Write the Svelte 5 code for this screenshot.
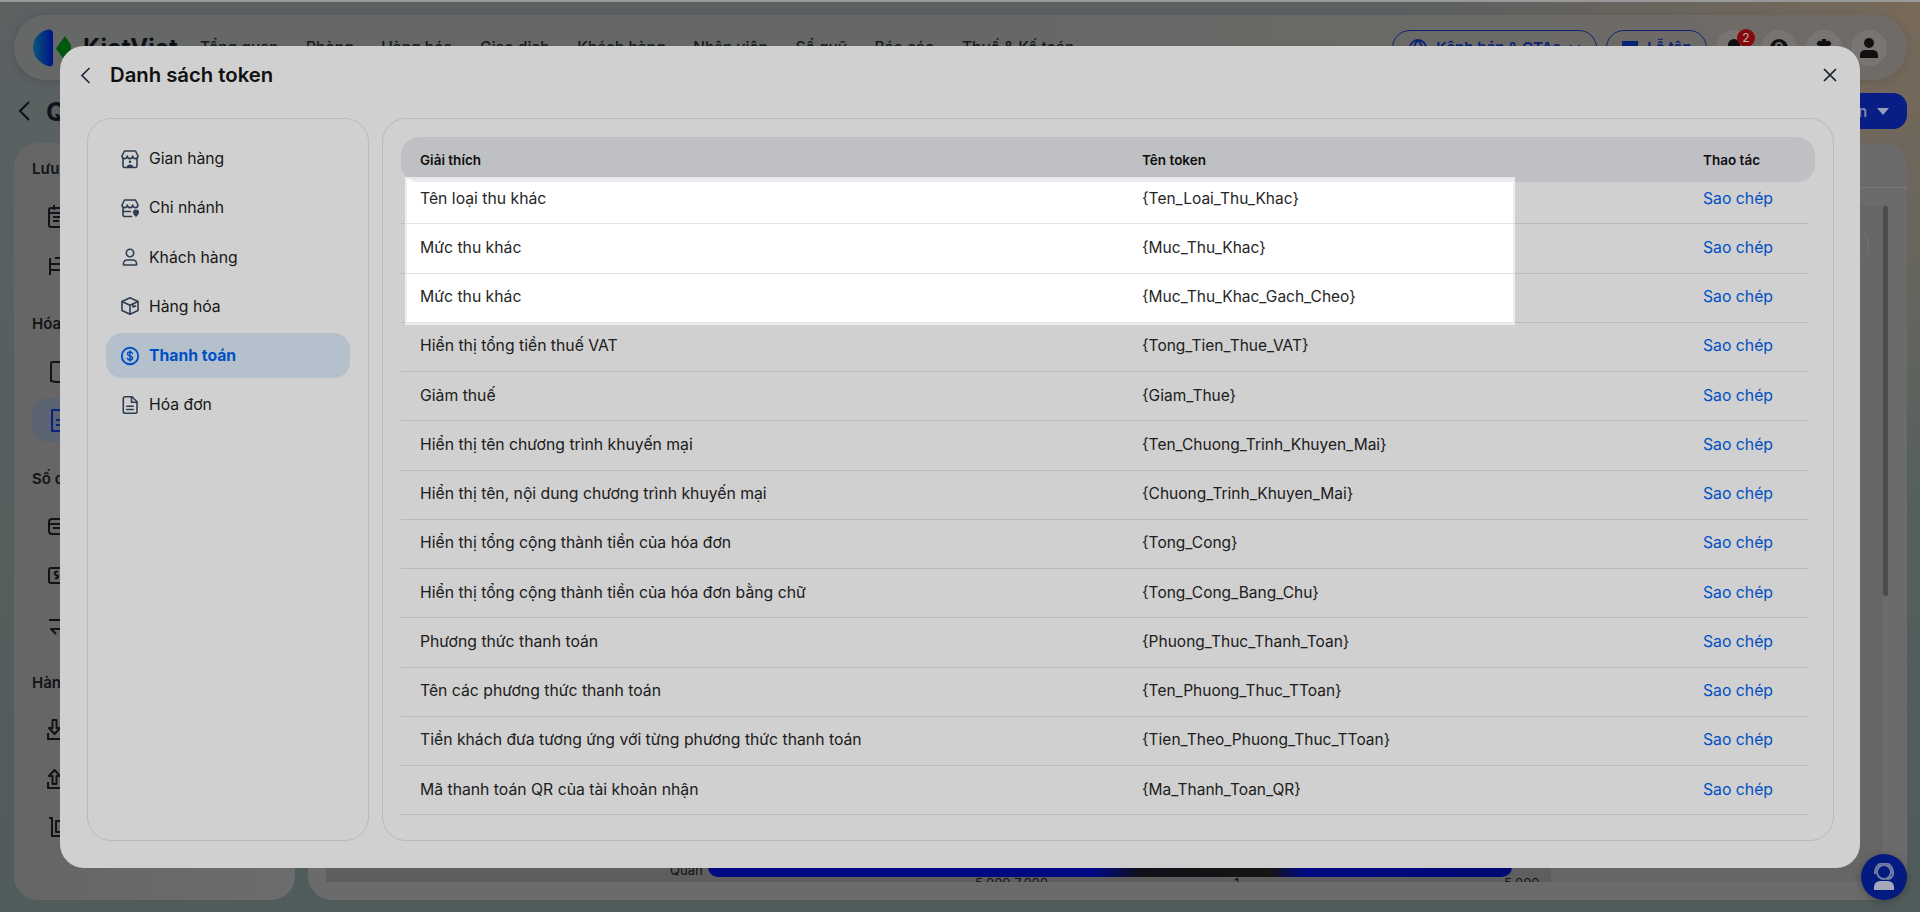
<script>
  const navItems = ["Tổng quan", "Phòng", "Hàng hóa", "Giao dịch", "Khách hàng", "Nhân viên", "Sổ quỹ", "Báo cáo", "Thuế & Kế toán"];

  const menu = [
    { id: "store", label: "Gian hàng" },
    { id: "branch", label: "Chi nhánh" },
    { id: "user", label: "Khách hàng" },
    { id: "box", label: "Hàng hóa" },
    { id: "money", label: "Thanh toán", active: true },
    { id: "doc", label: "Hóa đơn" },
  ];

  const tokens = [
    ["Tên loại thu khác", "{Ten_Loai_Thu_Khac}"],
    ["Mức thu khác", "{Muc_Thu_Khac}"],
    ["Mức thu khác", "{Muc_Thu_Khac_Gach_Cheo}"],
    ["Hiển thị tổng tiền thuế VAT", "{Tong_Tien_Thue_VAT}"],
    ["Giảm thuế", "{Giam_Thue}"],
    ["Hiển thị tên chương trình khuyến mại", "{Ten_Chuong_Trinh_Khuyen_Mai}"],
    ["Hiển thị tên, nội dung chương trình khuyến mại", "{Chuong_Trinh_Khuyen_Mai}"],
    ["Hiển thị tổng cộng thành tiền của hóa đơn", "{Tong_Cong}"],
    ["Hiển thị tổng cộng thành tiền của hóa đơn bằng chữ", "{Tong_Cong_Bang_Chu}"],
    ["Phương thức thanh toán", "{Phuong_Thuc_Thanh_Toan}"],
    ["Tên các phương thức thanh toán", "{Ten_Phuong_Thuc_TToan}"],
    ["Tiền khách đưa tương ứng với từng phương thức thanh toán", "{Tien_Theo_Phuong_Thuc_TToan}"],
    ["Mã thanh toán QR của tài khoản nhận", "{Ma_Thanh_Toan_QR}"],
  ];
</script>

{#snippet menuIcon(id)}
  <svg class="micon" viewBox="0 0 20 20" fill="none" stroke="currentColor" stroke-width="1.6" stroke-linecap="round" stroke-linejoin="round">
    {#if id === "store"}
      <path d="M4.500 2h11l2.500 5c0 3.500-5 3.500-5.300 0 0 3.500-5.400 3.500-5.400 0-.3 3.500-5.300 3.500-5.300 0z" />
      <path d="M3 10v7a1.500 1.500 0 0 0 1.500 1.500h11A1.500 1.500 0 0 0 17 17v-7" />
      <circle cx="10" cy="12.700" r="1.300" fill="currentColor" stroke="none" />
      <path d="M6.500 18.500c.2-2 1.600-3 3.500-3s3.300 1 3.500 3z" fill="currentColor" stroke="none" />
    {:else if id === "branch"}
      <path d="M4.500 2h11l2.500 5c0 3.500-5 3.500-5.300 0 0 3.500-5.400 3.500-5.400 0-.3 3.500-5.300 3.500-5.300 0z" />
      <path d="M3 10v7a1.500 1.500 0 0 0 1.500 1.500h7M3.500 13.500h7" />
      <path d="M16 11.500a3 3 0 0 1 3 3c0 2-3 4.500-3 4.500s-3-2.500-3-4.500a3 3 0 0 1 3-3z" fill="currentColor" stroke="none" />
    {:else if id === "user"}
      <circle cx="10" cy="6" r="3.700" />
      <path d="M3.500 18v-1.500A3.500 3.500 0 0 1 7 13h6a3.500 3.500 0 0 1 3.500 3.500V18z" />
    {:else if id === "box"}
      <path d="M10 1.800l8 3.700v9L10 18.200l-8-3.700v-9z" />
      <path d="M2 5.500l8 3.700 8-3.700M10 9.200v9M13 8v3l2.500-1.100" />
    {:else if id === "money"}
      <circle cx="10" cy="10" r="8.200" stroke-width="1.900" />
      <path d="M12.500 7.500c-.4-1-1.300-1.400-2.500-1.400-1.400 0-2.500.7-2.500 1.900 0 2.600 5.100 1.400 5.100 4 0 1.200-1.200 1.900-2.600 1.900-1.300 0-2.200-.5-2.600-1.500M10 4.800v10.400" stroke-width="1.500" />
    {:else}
      <path d="M5 1.800h7l5 5v9.700a1.700 1.700 0 0 1-1.700 1.700H5a1.700 1.700 0 0 1-1.700-1.700V3.500A1.700 1.700 0 0 1 5 1.800z" />
      <path d="M11.500 2v5.300H17M6.800 11.300h6.400M6.800 14.500h6.400" />
    {/if}
  </svg>
{/snippet}

{#snippet sideIcon(kind)}
  <svg class="sicon" viewBox="0 0 24 24" fill="none" stroke="currentColor" stroke-width="2" stroke-linejoin="round">
    {#if kind === "cal"}
      <rect x="2" y="4" width="24" height="19" rx="2" /><path d="M7 1v5M19 1v5M2 9h24M6 13h10M6 17h6" />
    {:else if kind === "bed"}
      <path d="M3 22V5M3 17h24M3 11h24M8 5h19" />
    {:else if kind === "note"}
      <path d="M5 3h24v20H9l-5-1V4z" />
    {:else if kind === "doc"}
      <path d="M5 2h24v21H5zM9 12h16M9 17h16" />
    {:else if kind === "wallet"}
      <rect x="2" y="5" width="26" height="15" rx="3" /><path d="M2 10h26M6 14h12" />
    {:else if kind === "cash"}
      <rect x="2" y="5" width="26" height="15" rx="2" /><path d="M11 9c-2-1-4 0-3 2s4 1 3 3-3 1-3 1" />
    {:else if kind === "swap"}
      <path d="M2 8h26M23 3l-5 5M30 17H4l5 5" />
    {:else if kind === "down"}
      <path d="M1 15v6h26M5.500 2h4v8h3.500l-5.500 6-5.500-6h3.500z" />
    {:else if kind === "up"}
      <path d="M1 15v6h26M5.500 17h4V9h3.500L7.500 3 2 9h3.500z" />
    {:else}
      <path d="M2 2h3v18h24M9 5h20v11H9z" />
    {/if}
  </svg>
{/snippet}

<div class="page">
  <header class="topbar">
    <div class="logo">
      <svg width="40" height="38" viewBox="0 0 40 38">
        <defs>
          <linearGradient id="lens" x1="0" x2="1">
            <stop offset="0" stop-color="#0a6a96" />
            <stop offset="1" stop-color="#0018a8" />
          </linearGradient>
        </defs>
        <path d="M16 .5C6 2 0 10 0 18.500 0 27 6 34 15 37c3 1 5 0 5-3V5c0-3-2-5-4-4.500z" fill="url(#lens)" />
        <path d="M32 7l6 9v8l-6 8-9-12.500z" fill="#006b12" />
      </svg>
      <span class="brand">KiotViet</span>
    </div>
    <nav class="nav">
      {#each navItems as item}
        <span>{item}</span>
      {/each}
    </nav>
    <div class="actions">
      <button class="pill wide">
        <svg width="20" height="20" viewBox="0 0 20 20" fill="none" stroke="currentColor" stroke-width="1.800"><circle cx="10" cy="10" r="8" /><path d="M2 10h16M10 2c-5 5-5 11 0 16M10 2c5 5 5 11 0 16" /></svg>
        Kênh bán &amp; OTAs
        <svg width="12" height="8" viewBox="0 0 12 8" fill="none" stroke="currentColor" stroke-width="1.600"><path d="M1 1l5 5 5-5" /></svg>
      </button>
      <button class="pill desk">
        <svg width="18" height="18" viewBox="0 0 18 18" fill="currentColor"><path d="M1 2h16v14H1zM3 7v7h4V7zm6 0v3h6V7z" fill-rule="evenodd" /></svg>
        Lễ tân
      </button>
      <div class="round bell">
        <svg width="18" height="20" viewBox="0 0 18 20" fill="#141414"><path d="M9 1a6 6 0 0 0-6 6v5l-2 3h16l-2-3V7a6 6 0 0 0-6-6zM7 17h4a2 2 0 0 1-4 0z" /></svg>
        <span class="badge">2</span>
      </div>
      <div class="round">
        <svg width="20" height="20" viewBox="0 0 20 20"><circle cx="10" cy="10" r="9" fill="#141414" /><path d="M7 8a3 3 0 1 1 4.500 2.500c-1 .6-1.500 1-1.500 2" fill="none" stroke="#847f7a" stroke-width="2" /></svg>
      </div>
      <div class="round">
        <svg width="20" height="20" viewBox="0 0 20 20"><path d="M8 1h4l.6 2.500 2.400-1 2.500 3-1.700 2 .0 2.500 2 1.500-2 3.500-2.600-.8L12 19H8l-.7-2.300-2.600.8-2-3.500 2-1.500V8L2.500 5.500l2.500-3 2.400 1z" fill="#141414" /></svg>
      </div>
      <div class="round">
        <svg width="20" height="22" viewBox="0 0 20 22" fill="#141414"><circle cx="10" cy="6" r="5" /><path d="M1 21v-3a5 5 0 0 1 5-5h8a5 5 0 0 1 5 5v3z" /></svg>
      </div>
    </div>
  </header>

  <div class="titlerow">
    <svg width="14" height="22" viewBox="0 0 14 22" fill="none" stroke="#141414" stroke-width="2"><path d="M12 2L3 11l9 9" /></svg>
    <h1>Quản lý mẫu in</h1>
    <button class="primary">Tạo mẫu in <i class="caret"></i></button>
  </div>

  <div class="content">
    <aside class="side">
      <h4>Lưu trú</h4>
      <div class="sitem">{@render sideIcon("cal")}</div>
      <div class="sitem">{@render sideIcon("bed")}</div>
      <h4>Hóa đơn</h4>
      <div class="sitem">{@render sideIcon("note")}</div>
      <div class="sitem on">{@render sideIcon("doc")}</div>
      <h4>Số quỹ</h4>
      <div class="sitem">{@render sideIcon("wallet")}</div>
      <div class="sitem">{@render sideIcon("cash")}</div>
      <div class="sitem">{@render sideIcon("swap")}</div>
      <h4>Hàng hóa</h4>
      <div class="sitem">{@render sideIcon("down")}</div>
      <div class="sitem">{@render sideIcon("up")}</div>
      <div class="sitem">{@render sideIcon("cart")}</div>
    </aside>
    <main class="main">
      <div class="mainhead"></div>
      <div class="mainbody">
        <div class="canvas">
          <div class="preview">
            <span class="quan">Quan</span>
            <div class="banner"></div>
          </div>
          <div class="figures">
            <span>5.000 7.000</span>
            <span>1</span>
            <span>5.000</span>
          </div>
        </div>
        <div class="tools">
          <div class="toolpill"></div>
        </div>
        <div class="scrollbar"></div>
      </div>
    </main>
  </div>

  <button class="fab" aria-label="Hỗ trợ">
    <svg width="24" height="28" viewBox="0 0 24 28" fill="none" stroke="#8f9bc4" stroke-width="2"><circle cx="12" cy="9" r="7" /><path d="M3 11V9a9 9 0 0 1 18 0v2c0 3-3 5-6 5" /><path d="M2 27v-3a6 6 0 0 1 6-6h8a6 6 0 0 1 6 6v3z" fill="#c9cfe2" stroke="none" /></svg>
  </button>
</div>

<section class="modal">
  <div class="mhead">
    <svg class="back" width="11" height="17" viewBox="0 0 11 17" fill="none" stroke="#273447" stroke-width="1.700"><path d="M9.500 1L2 8.500 9.500 16" /></svg>
    <h2>Danh sách token</h2>
    <svg class="close" width="14" height="14" viewBox="0 0 14 14" fill="none" stroke="#1b2430" stroke-width="1.700"><path d="M1 1l12 12M13 1L1 13" /></svg>
  </div>
  <div class="mbody">
    <ul class="menu">
      {#each menu as m}
        <li class:active={m.active}>
          {@render menuIcon(m.id)}
          <span>{m.label}</span>
        </li>
      {/each}
    </ul>
    <div class="tablepanel">
      <div class="thead row-grid">
        <span>Giải thích</span>
        <span>Tên token</span>
        <span>Thao tác</span>
      </div>
      <div class="tbody">
        {#each tokens as t}
          <div class="row row-grid">
            <span>{t[0]}</span>
            <span class="token">{t[1]}</span>
            <a href="#copy">Sao chép</a>
          </div>
        {/each}
      </div>
    </div>
  </div>
</section>

<!-- tour overlay: dims everything but the hole -->
<div class="tour">
  <div class="hole"></div>
</div>

<style>
  :global(body) {
    margin: 0;
    overflow: hidden;
    font-family: Inter, "Liberation Sans", sans-serif;
    color: #141414;
  }

  .page {
    height: 912px;
    border-top: 2px solid #bcbcbc;
    padding: 13px 13px 12px 14px;
    box-sizing: border-box;
    display: flex;
    flex-direction: column;
    overflow: hidden;
    position: relative;
    background:
      radial-gradient(circle at 100% 0, #93826e 0, rgba(147, 130, 110, 0) 520px),
      linear-gradient(180deg, #717678 0, #697776 35%, #637170 100%);
  }

  .topbar {
    height: 65px;
    flex: none;
    border-radius: 33px;
    background: linear-gradient(90deg, #7c807f 0, #7e807e 55%, #8a847f 100%);
    display: flex;
    align-items: center;
    padding: 0 20px 0 19px;
    box-sizing: border-box;
    box-shadow: 0 2px 8px rgba(0, 0, 0, 0.12);
  }
  .logo {
    display: flex;
    align-items: center;
    gap: 10px;
    width: 167px;
    flex: none;
  }
  .brand {
    font-weight: 700;
    font-size: 24px;
    color: #10141a;
  }
  .nav {
    display: flex;
    gap: 27.700px;
    font-size: 15.500px;
    font-weight: 500;
    color: #1a1f24;
  }
  .actions {
    margin-left: auto;
    display: flex;
    align-items: center;
    gap: 9px;
  }
  .pill {
    height: 36px;
    padding: 0;
    border-radius: 18px;
    border: 1.500px solid #0b2a8f;
    background: transparent;
    color: #0b2a8f;
    font: 600 15px Inter, sans-serif;
    display: flex;
    align-items: center;
    justify-content: center;
    gap: 8px;
  }
  .pill.wide {
    width: 205px;
  }
  .pill.desk {
    width: 101px;
  }
  .round {
    width: 36px;
    height: 36px;
    border-radius: 50%;
    background: rgba(255, 255, 255, 0.1);
    display: flex;
    align-items: center;
    justify-content: center;
    position: relative;
  }
  .badge {
    position: absolute;
    top: -1px;
    right: -3px;
    width: 18px;
    height: 18px;
    border-radius: 50%;
    background: #a30d12;
    color: #e4d4d4;
    font-size: 12px;
    line-height: 18px;
    text-align: center;
  }

  .titlerow {
    height: 36px;
    flex: none;
    margin: 13px 0 14px;
    display: flex;
    align-items: center;
    padding-left: 3px;
  }
  .titlerow h1 {
    margin: 0 0 0 15px;
    font-size: 26px;
    font-weight: 700;
    color: #14181d;
  }
  .primary {
    margin-left: auto;
    height: 36px;
    width: 150px;
    border: 0;
    border-radius: 0 14px 14px 0;
    background: #0a24a4;
    color: #9aa6d0;
    font: 600 15px Inter, sans-serif;
    text-align: right;
    padding: 0 18px 0 0;
  }
  .caret {
    display: inline-block;
    margin-left: 6px;
    border: 6px solid transparent;
    border-top: 7px solid #b9c2de;
    border-bottom: 0;
    vertical-align: 2px;
  }

  .content {
    flex: 1;
    min-height: 0;
    display: flex;
    gap: 13px;
  }
  .side {
    width: 281px;
    flex: none;
    border-radius: 24px;
    background: linear-gradient(90deg, #7d7d7d, #858585);
    padding: 15px 18px;
    box-sizing: border-box;
  }
  .side h4 {
    margin: 26px 0 14px 0;
    font-size: 15px;
    font-weight: 600;
    line-height: 22px;
    color: #14181d;
  }
  .side h4:first-child {
    margin-top: 0;
  }
  .sitem {
    height: 44px;
    margin: 0 0 5px 0;
    padding-left: 14px;
    border-radius: 16px;
    color: #14181d;
    display: flex;
    align-items: center;
  }
  .sitem.on {
    background: #6f7a88;
    color: #0a2d9c;
  }
  .sicon {
    width: 26px;
    height: 24px;
    overflow: visible;
  }

  .main {
    flex: 1;
    border-radius: 24px;
    background: #848484;
    display: flex;
    flex-direction: column;
    overflow: hidden;
  }
  .mainhead {
    height: 44px;
    flex: none;
    border-bottom: 1px solid #969696;
  }
  .mainbody {
    flex: 1;
    display: flex;
    align-items: stretch;
    min-height: 0;
    padding: 18px 0 18px 18px;
  }
  .canvas {
    width: 1225px;
    flex: none;
    background: #747474;
    display: flex;
    flex-direction: column;
    justify-content: flex-end;
    overflow: hidden;
    font-size: 13px;
    color: #14181d;
  }
  .preview {
    display: flex;
    align-items: flex-end;
    height: 30px;
    flex: none;
  }
  .quan {
    width: 38px;
    margin: 0 0 -1px 344px;
    line-height: 16px;
  }
  .banner {
    width: 804px;
    height: 21px;
    background: linear-gradient(90deg, #000ba0 0, #000ba0 48%, #14141e 54%, #1a1a18 70%, #000ba0 74%, #000a8c 100%);
    border-radius: 0 0 10px 10px;
  }
  .figures {
    height: 16px;
    flex: none;
    line-height: 16px;
    display: grid;
    grid-template-columns: 259px 270px auto;
    padding-left: 649px;
    margin: -2px 0 -9px;
  }
  .tools {
    flex: 1;
    background: #7d7d7d;
    padding: 20px 14px 0 0;
    display: flex;
    justify-content: flex-end;
    align-items: flex-start;
  }
  .toolpill {
    width: 40px;
    height: 36px;
    border: 1px solid #8e8e8e;
    border-radius: 18px;
  }
  .scrollbar {
    width: 5px;
    height: 390px;
    border-radius: 3px;
    background: #5c5c5c;
    margin-right: 19px;
    flex: none;
  }

  .fab {
    position: absolute;
    right: 13px;
    bottom: 12px;
    width: 46px;
    height: 46px;
    border: 0;
    padding: 0;
    border-radius: 50%;
    background: #04209f;
    display: flex;
    align-items: center;
    justify-content: center;
    box-shadow: 0 2px 8px rgba(0, 0, 0, 0.25);
  }

  .modal {
    position: fixed;
    left: 60px;
    top: 46px;
    width: 1800px;
    height: 822px;
    border-radius: 24px;
    background: #fff;
    padding: 0 26px 27px 27px;
    box-sizing: border-box;
    display: flex;
    flex-direction: column;
  }
  .mhead {
    height: 58px;
    margin-bottom: 14px;
    flex: none;
    display: flex;
    align-items: center;
    gap: 19px;
    color: #141414;
  }
  .back {
    margin-left: -7px;
  }
  .mhead h2 {
    margin: 0;
    font-size: 20.300px;
    font-weight: 600;
    line-height: 1;
  }
  .close {
    margin-left: auto;
    margin-right: -3px;
  }
  .mbody {
    flex: 1;
    min-height: 0;
    display: flex;
    gap: 13px;
  }
  .menu {
    width: 282px;
    flex: none;
    list-style: none;
    margin: 0;
    padding: 17px 18px;
    box-sizing: border-box;
    border: 1px solid #e4e4e6;
    border-radius: 24px;
    display: flex;
    flex-direction: column;
    gap: 4.300px;
  }
  .menu li {
    height: 45px;
    padding-left: 14px;
    border-radius: 16px;
    display: flex;
    align-items: center;
    gap: 9px;
    font-size: 15.750px;
    color: #1c1c1c;
  }
  .menu li.active {
    background: #deecfc;
    color: #0062f0;
    font-weight: 700;
  }
  .micon {
    width: 20px;
    height: 20px;
    flex: none;
    color: #3a4b63;
  }
  .active .micon {
    color: #0062f0;
  }

  .tablepanel {
    flex: 1;
    border: 1px solid #e4e4e6;
    border-radius: 24px;
    padding: 18px 18px 0;
    overflow: hidden;
  }
  .row-grid {
    display: grid;
    grid-template-columns: 722px 561px 1fr;
    align-items: center;
    padding-left: 19px;
  }
  .thead {
    height: 45px;
    border-radius: 18px;
    background: #ebecef;
    font-size: 13.500px;
    font-weight: 600;
    color: #111;
    position: relative;
    z-index: 1;
  }
  .tbody {
    margin-top: -7px;
    margin-right: 6px;
  }
  .row {
    height: 49.250px;
    box-sizing: border-box;
    padding-bottom: 2px;
    border-bottom: 1px solid #e3e4e6;
    font-size: 15.750px;
    color: #262626;
  }
  .token {
    font-size: 15.500px;
  }
  .row a {
    color: #0062f0;
    text-decoration: none;
  }

  .tour {
    position: fixed;
    inset: 0;
    overflow: hidden;
    pointer-events: none;
  }
  .hole {
    position: absolute;
    left: 405px;
    top: 177px;
    width: 1110px;
    height: 148px;
    box-sizing: border-box;
    border: 2px solid rgba(232, 233, 236, 0.8);
    box-shadow: 0 0 0 2400px rgba(0, 0, 0, 0.184);
  }
</style>
